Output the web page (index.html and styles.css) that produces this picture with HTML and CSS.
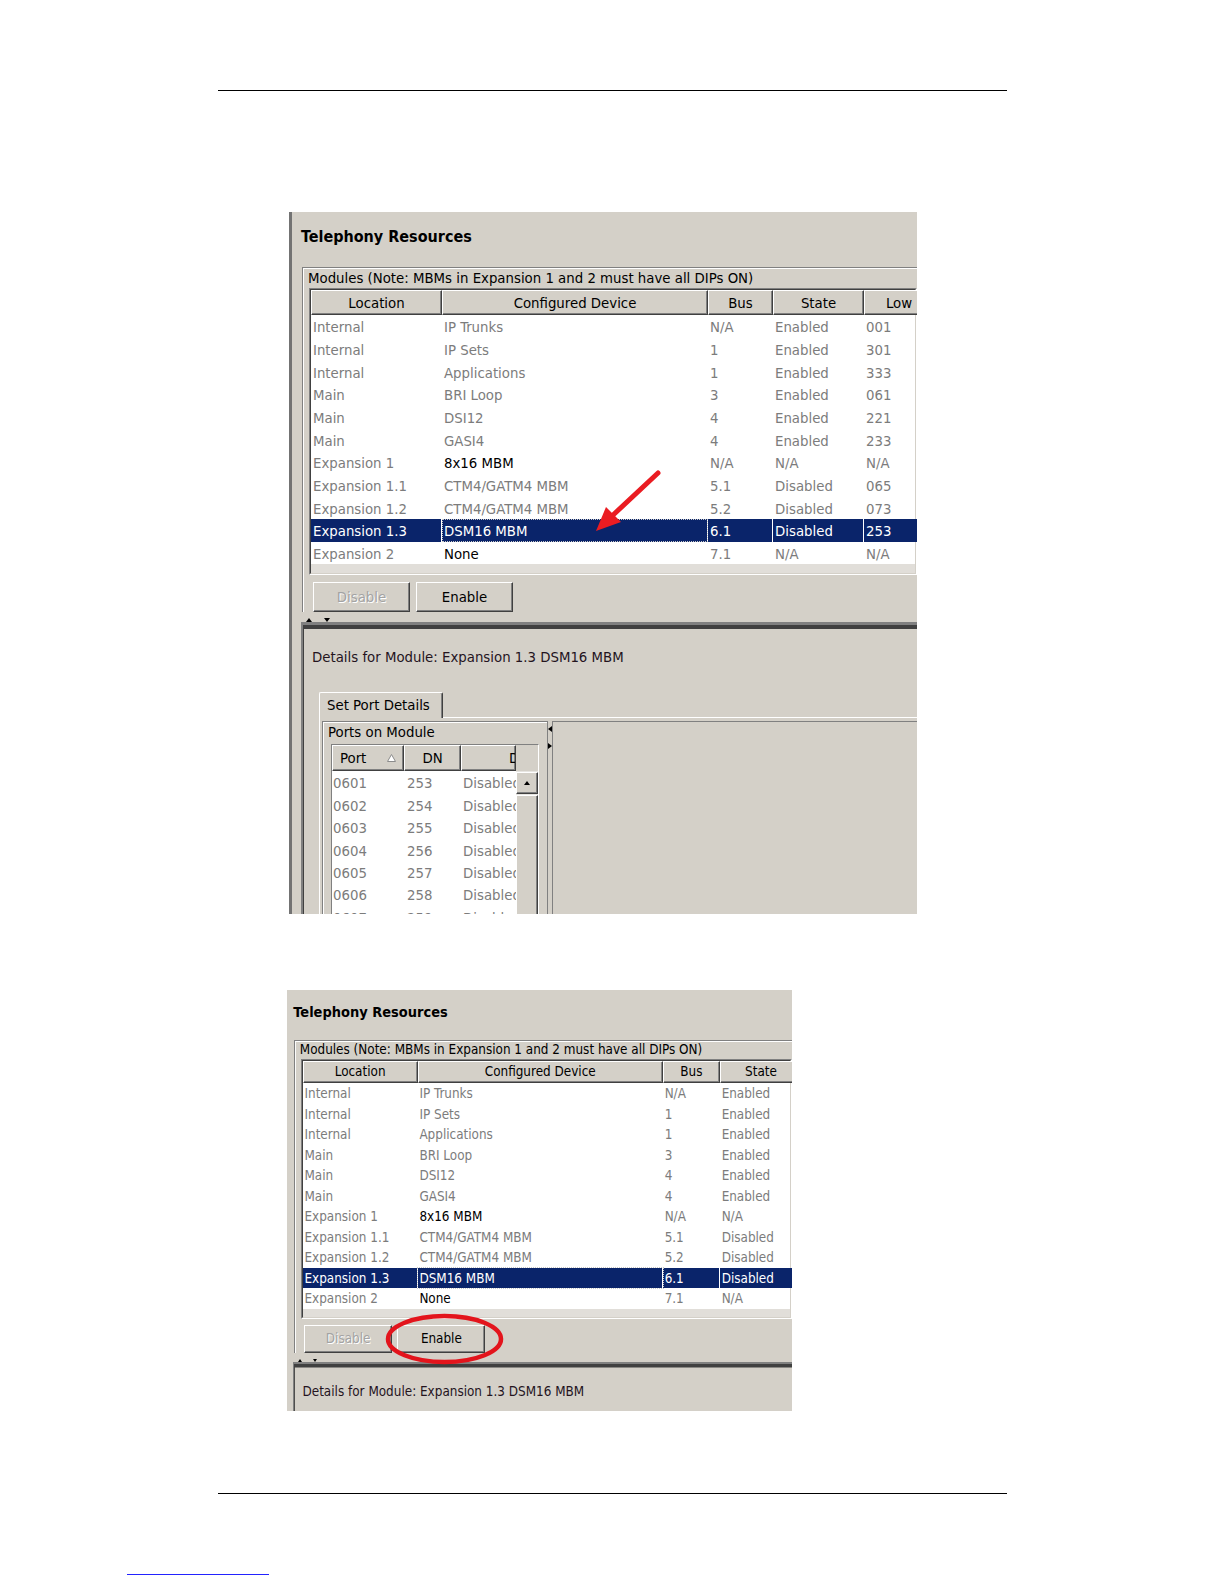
FILE: index.html
```html
<!doctype html>
<html>
<head>
  <meta charset="utf-8">
  <title>Telephony Resources - enable a module</title>
  <link rel="stylesheet" href="styles.css">
</head>
<body>
  <div class="rule rule-top"></div>

  <!-- first capture: select the module -->
  <div class="shot shot-a">
    <div class="win">
      <div class="win-title">Telephony Resources</div>
      <div class="group">
        <div class="group-label">Modules (Note: MBMs in Expansion 1 and 2 must have all DIPs ON)</div>
        <div class="grid-wrap">
          <div class="grid-inner">
            <table class="grid">
              <colgroup>
                <col class="c-loc"><col class="c-dev"><col class="c-bus"><col class="c-state"><col class="c-low">
              </colgroup>
              <thead>
                <tr><th>Location</th><th>Configured Device</th><th>Bus</th><th>State</th><th>Low</th></tr>
              </thead>
              <tbody>
                <tr><td>Internal</td><td>IP Trunks</td><td>N/A</td><td>Enabled</td><td>001</td></tr>
                <tr><td>Internal</td><td>IP Sets</td><td>1</td><td>Enabled</td><td>301</td></tr>
                <tr><td>Internal</td><td>Applications</td><td>1</td><td>Enabled</td><td>333</td></tr>
                <tr><td>Main</td><td>BRI Loop</td><td>3</td><td>Enabled</td><td>061</td></tr>
                <tr><td>Main</td><td>DSI12</td><td>4</td><td>Enabled</td><td>221</td></tr>
                <tr><td>Main</td><td>GASI4</td><td>4</td><td>Enabled</td><td>233</td></tr>
                <tr><td>Expansion 1</td><td class="on">8x16 MBM</td><td>N/A</td><td>N/A</td><td>N/A</td></tr>
                <tr><td>Expansion 1.1</td><td>CTM4/GATM4 MBM</td><td>5.1</td><td>Disabled</td><td>065</td></tr>
                <tr><td>Expansion 1.2</td><td>CTM4/GATM4 MBM</td><td>5.2</td><td>Disabled</td><td>073</td></tr>
                <tr class="sel"><td>Expansion 1.3</td><td class="focus">DSM16 MBM</td><td>6.1</td><td>Disabled</td><td>253</td></tr>
                <tr><td>Expansion 2</td><td class="on">None</td><td>7.1</td><td>N/A</td><td>N/A</td></tr>
              </tbody>
            </table>
            <div class="grid-band"></div>
          </div>
        </div>
        <div class="btn-row">
          <button class="btn" disabled>Disable</button>
          <button class="btn">Enable</button>
        </div>
      </div>
      <div class="splitter"><span class="tri-up"></span><span class="tri-down"></span></div>
      <div class="details">
        <div class="details-text">Details for Module: Expansion 1.3 DSM16 MBM</div>
        <div class="tab">Set Port Details</div>
        <div class="tab-panel">
          <div class="ports">
            <div class="ports-title">Ports on Module</div>
            <div class="ports-scroll">
              <div class="ports-head">
                <div class="ph ph-port">Port
                  <svg class="sort" width="9" height="8" viewBox="0 0 9 8"><polygon points="4.5,0.5 8.5,7.5 0.5,7.5" fill="#fff" stroke="#8c8c8c"/></svg>
                </div>
                <div class="ph ph-dn">DN</div>
                <div class="ph ph-desc">D</div>
                <div class="ph-corner"></div>
              </div>
              <div class="ports-body">
                <table class="ports-grid">
                  <tr><td>0601</td><td>253</td><td>Disabled</td></tr>
                  <tr><td>0602</td><td>254</td><td>Disabled</td></tr>
                  <tr><td>0603</td><td>255</td><td>Disabled</td></tr>
                  <tr><td>0604</td><td>256</td><td>Disabled</td></tr>
                  <tr><td>0605</td><td>257</td><td>Disabled</td></tr>
                  <tr><td>0606</td><td>258</td><td>Disabled</td></tr>
                  <tr><td>0607</td><td>259</td><td>Disabled</td></tr>
                </table>
                <div class="vscroll">
                  <div class="sb-up"><span class="tri-up"></span></div>
                  <div class="sb-thumb"></div>
                </div>
              </div>
            </div>
          </div>
          <div class="split-v"><span class="tri-left"></span><span class="tri-right"></span></div>
          <div class="pane-right"></div>
        </div>
      </div>
    </div>
    <svg class="mark" width="628" height="702" viewBox="0 0 628 702">
      <line x1="369" y1="261" x2="323" y2="304" stroke="#ea1c22" stroke-width="5" stroke-linecap="round"/>
      <polygon points="307,319 332,310 317,295" fill="#ea1c22"/>
    </svg>
  </div>

  <!-- second capture: press Enable -->
  <div class="shot shot-b">
    <div class="win">
      <div class="win-title">Telephony Resources</div>
      <div class="group">
        <div class="group-label">Modules (Note: MBMs in Expansion 1 and 2 must have all DIPs ON)</div>
        <div class="grid-wrap">
          <div class="grid-inner">
            <table class="grid">
              <colgroup>
                <col class="c-loc"><col class="c-dev"><col class="c-bus"><col class="c-state">
              </colgroup>
              <thead>
                <tr><th>Location</th><th>Configured Device</th><th>Bus</th><th>State</th></tr>
              </thead>
              <tbody>
                <tr><td>Internal</td><td>IP Trunks</td><td>N/A</td><td>Enabled</td></tr>
                <tr><td>Internal</td><td>IP Sets</td><td>1</td><td>Enabled</td></tr>
                <tr><td>Internal</td><td>Applications</td><td>1</td><td>Enabled</td></tr>
                <tr><td>Main</td><td>BRI Loop</td><td>3</td><td>Enabled</td></tr>
                <tr><td>Main</td><td>DSI12</td><td>4</td><td>Enabled</td></tr>
                <tr><td>Main</td><td>GASI4</td><td>4</td><td>Enabled</td></tr>
                <tr><td>Expansion 1</td><td class="on">8x16 MBM</td><td>N/A</td><td>N/A</td></tr>
                <tr><td>Expansion 1.1</td><td>CTM4/GATM4 MBM</td><td>5.1</td><td>Disabled</td></tr>
                <tr><td>Expansion 1.2</td><td>CTM4/GATM4 MBM</td><td>5.2</td><td>Disabled</td></tr>
                <tr class="sel"><td>Expansion 1.3</td><td class="focus">DSM16 MBM</td><td>6.1</td><td>Disabled</td></tr>
                <tr><td>Expansion 2</td><td class="on">None</td><td>7.1</td><td>N/A</td></tr>
              </tbody>
            </table>
            <div class="grid-band"></div>
          </div>
        </div>
        <div class="btn-row">
          <button class="btn" disabled>Disable</button>
          <button class="btn">Enable</button>
        </div>
      </div>
      <div class="splitter"><span class="tri-up"></span><span class="tri-down"></span></div>
      <div class="details">
        <div class="details-text">Details for Module: Expansion 1.3 DSM16 MBM</div>
      </div>
    </div>
    <svg class="mark" width="505" height="421" viewBox="0 0 505 421">
      <ellipse cx="157.5" cy="349" rx="56.5" ry="23" fill="none" stroke="#e3141c" stroke-width="4.5"/>
    </svg>
  </div>

  <div class="rule rule-bottom"></div>
  <div class="footer"><a class="footer-link" href="#"></a></div>
</body>
</html>
```

FILE: styles.css
```css
body {
  margin: 0;
  background: #fff;
}

.rule {
  height: 0;
  border-top: 1px solid #000;
}

.rule-top {
  margin: 90px 217px 0 218px;
}

.rule-bottom {
  margin: 82px 217px 0 218px;
}

.footer {
  padding: 80px 0 0 127px;
}

.footer-link {
  display: block;
  width: 142px;
  height: 0;
  border-bottom: 1px solid #2323ff;
}

/* captured windows */
.shot {
  position: relative;
  overflow: hidden;
  background: #d4d0c8;
  font-family: "DejaVu Sans Condensed", "DejaVu Sans", sans-serif;
  font-stretch: condensed;
  font-size: 14.8px;
  line-height: 18px;
  color: #000;
}

.shot-a {
  width: 628px;
  height: 702px;
  margin: 121px 0 0 289px;
}

.shot-b {
  width: 505px;
  height: 421px;
  margin: 76px 0 0 287px;
}

.mark {
  position: absolute;
  left: 0;
  top: 0;
}

.win {
  border-left: 3px solid #737373;
  height: 100%;
}

.shot-b .win {
  zoom: 0.905;
  border-left: 0;
  margin-left: -2px;
}

.win-title {
  padding: 16px 0 0 9px;
  font-size: 16px;
  font-weight: bold;
}

.group {
  margin: 21px 0 0 10px;
  border-top: 1px solid #808080;
  border-left: 1px solid #808080;
  box-shadow: inset 1px 1px #fff;
  padding: 1px 0 0 1px;
}

.group-label {
  padding-left: 4px;
  white-space: nowrap;
}

.grid-wrap {
  margin: 1px 0 0 5px;
  border: 1px solid;
  border-color: #808080 #fff #fff #808080;
}

.grid-inner {
  border: 1px solid;
  border-color: #404040 #d4d0c8 #d4d0c8 #404040;
  background: #fff;
}

.grid {
  table-layout: fixed;
  border-collapse: separate;
  border-spacing: 0;
  width: 623px;
}

.shot-b .grid {
  width: 552px;
}

.c-loc { width: 131px; }
.c-dev { width: 266px; }
.c-bus { width: 65px; }
.c-state { width: 91px; }
.c-low { width: 70px; }

.shot-b .c-loc { width: 127px; }
.shot-b .c-dev { width: 271px; }
.shot-b .c-bus { width: 63px; }

.grid th {
  height: 25px;
  box-sizing: border-box;
  padding: 0;
  border: 1px solid;
  border-color: #fff #404040 #404040 #fff;
  box-shadow: inset -1px -1px #808080;
  background: #d4d0c8;
  font-weight: normal;
  text-align: center;
  white-space: nowrap;
  overflow: hidden;
}

.grid td {
  height: 22.66px;
  box-sizing: border-box;
  padding: 2px 0 0 2px;
  border-right: 1px solid #fff;
  color: #7c7c7c;
  white-space: nowrap;
  overflow: hidden;
}

.grid td.on {
  color: #000;
}

.grid tr.sel td {
  background: #0a246a;
  color: #fff;
}

.grid tr.sel td.focus {
  outline: 1px dotted #c9c9c9;
  outline-offset: -1px;
}

.grid-band {
  height: 9px;
  background: #e1ded9;
}

.btn-row {
  display: flex;
  gap: 6px;
  margin: 7px 0 0 9px;
}

.btn {
  width: 97px;
  height: 30px;
  padding: 0;
  border: 1px solid;
  border-color: #fff #404040 #404040 #fff;
  box-shadow: inset -1px -1px #808080;
  background: #d4d0c8;
  font: inherit;
  color: #000;
}

.btn:disabled {
  color: #a3a3a3;
  text-shadow: 1px 1px #fff;
}

/* small splitter arrows */
.tri-up,
.tri-down,
.tri-left,
.tri-right {
  display: block;
  width: 0;
  height: 0;
  border: 0 solid transparent;
}

.tri-up {
  border-width: 0 3px 4px;
  border-bottom-color: #000;
}

.tri-down {
  border-width: 4px 3px 0;
  border-top-color: #000;
}

.tri-left {
  border-width: 3px 4px 3px 0;
  border-right-color: #000;
}

.tri-right {
  border-width: 3px 0 3px 4px;
  border-left-color: #000;
}

.splitter {
  height: 10px;
  display: flex;
  align-items: flex-end;
  gap: 12px;
  padding-left: 14px;
}

.details {
  margin-left: 9px;
  border-top: 3px solid #808080;
  border-left: 2px solid #808080;
  box-shadow: inset 1px 4px #404040;
  padding: 23px 0 0 9px;
  height: 100%;
}

.details-text {
  color: #24141e;
  white-space: nowrap;
}

.tab {
  position: relative;
  width: 124px;
  height: 26px;
  box-sizing: border-box;
  margin: 26px 0 -1px 7px;
  padding: 3px 0 0 7px;
  border-top: 1px solid #fff;
  border-left: 1px solid #fff;
  border-right: 1px solid #404040;
  border-radius: 2px 2px 0 0;
  box-shadow: inset -1px 0 #808080;
  background: #d4d0c8;
  white-space: nowrap;
}

.tab-panel {
  display: flex;
  margin-left: 7px;
  border-top: 1px solid #fff;
  border-left: 1px solid #fff;
  padding: 3px 0 0 2px;
}

.ports {
  width: 226px;
  height: 320px;
  box-sizing: border-box;
  border: 1px solid #808080;
  box-shadow: inset 1px 1px #fff;
}

.ports-title {
  padding: 1px 0 0 5px;
}

.ports-scroll {
  width: 208px;
  margin: 3px 0 0 8px;
  border: 1px solid;
  border-color: #808080 #fff #fff #808080;
  box-sizing: border-box;
}

.ports-head {
  display: flex;
  height: 26px;
}

.ph,
.ph-corner {
  box-sizing: border-box;
  border: 1px solid;
  border-color: #fff #404040 #404040 #fff;
  box-shadow: inset -1px -1px #808080;
  line-height: 23px;
  white-space: nowrap;
  overflow: hidden;
}

.ph-port {
  width: 72px;
  padding-left: 7px;
}

.ph-dn {
  width: 57px;
  text-align: center;
}

.ph-desc {
  width: 55px;
  padding-left: 47px;
}

.ph-corner {
  width: 20px;
  border: 0;
  box-shadow: none;
}

.sort {
  margin-left: 16px;
  vertical-align: 1px;
}

.ports-body {
  display: flex;
  align-items: flex-start;
  background: #fff;
}

.ports-grid {
  table-layout: fixed;
  border-collapse: collapse;
  width: 184px;
}

.ports-grid td {
  height: 22.4px;
  box-sizing: border-box;
  padding: 2px 0 0 1px;
  color: #7c7c7c;
  white-space: nowrap;
  overflow: hidden;
}

.ports-grid td:nth-child(1) { width: 72px; }
.ports-grid td:nth-child(2) { width: 57px; padding-left: 3px; }
.ports-grid td:nth-child(3) { width: 55px; padding-left: 2px; }

.vscroll {
  width: 22px;
  background: #e7e5e1;
  padding-top: 1px;
}

.sb-up,
.sb-thumb {
  box-sizing: border-box;
  border: 1px solid;
  border-color: #fff #404040 #404040 #fff;
  box-shadow: inset -1px -1px #808080;
  background: #d4d0c8;
}

.sb-up {
  height: 22px;
  display: flex;
  align-items: center;
  justify-content: center;
}

.sb-thumb {
  height: 200px;
  margin-top: 1px;
}

.split-v {
  width: 4px;
  padding-top: 5px;
  display: flex;
  flex-direction: column;
  gap: 11px;
}

.pane-right {
  flex: 1;
  height: 320px;
  border-top: 1px solid #808080;
  border-left: 1px solid #808080;
}
```
